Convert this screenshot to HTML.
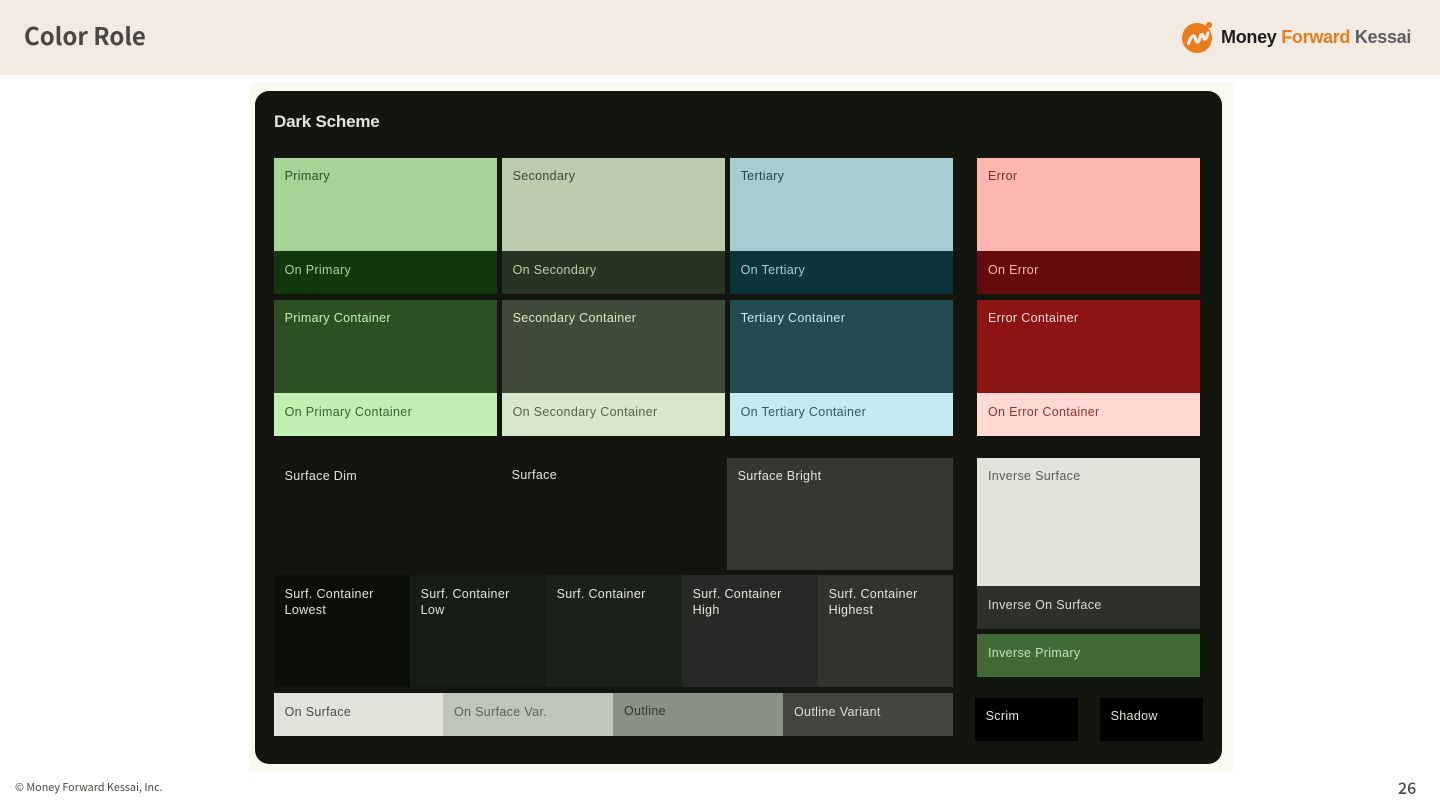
<!DOCTYPE html>
<html><head><meta charset="utf-8"><style>
html,body{margin:0;padding:0;background:#fff}
body{width:1440px;height:810px;overflow:hidden;position:relative;font-family:"Liberation Sans",sans-serif}
div{position:absolute;box-sizing:border-box}
.b{font-size:12.5px;line-height:16px;letter-spacing:.33px;padding:11px 0 0 10.6px;white-space:pre-line}
.t{padding-top:10px}
.r{padding-left:11px}
</style></head><body>
<div style="left:0;top:0;width:1440px;height:75px;background:#f3ebe2"></div>
<div style="left:24px;top:17px;font:700 24px/36px 'Noto Sans CJK JP',sans-serif;color:#4a4742;white-space:nowrap">Color Role</div>
<svg style="position:absolute;left:1180px;top:20px" width="36" height="34" viewBox="0 0 36 34"><circle cx="17" cy="18" r="15" fill="#e87d1e"/><circle cx="29" cy="5" r="3" fill="#e87d1e"/><path d="M8.500 23.500C10 19 12 15.500 14 16C16 16.500 15 22 17.500 22C20 22 19.500 14 22 14.500C24 15 23 19.500 25 19C26.500 18.500 27 16 28 13" fill="none" stroke="#f3ebe2" stroke-width="3.200" stroke-linecap="round"/></svg>
<div style="left:1221px;top:24px;font:700 18px/26px 'Liberation Sans',sans-serif;white-space:nowrap;color:#1d1d1d;letter-spacing:-.3px">Money <span style="color:#e87d1e">Forward</span> <span style="color:#5f5f5f">Kessai</span></div>
<div style="left:249px;top:83px;width:984px;height:688px;background:#f8faf0"></div>
<div style="left:255px;top:91px;width:967px;height:673px;background:#13150f;border-radius:14px"></div>
<div style="left:274px;top:110px;font:700 17px/24px 'Liberation Sans',sans-serif;letter-spacing:-.2px;color:#e3e4dc;white-space:nowrap">Dark Scheme</div>

<div class="b t" style="left:274px;top:158px;width:223px;height:93px;background:#a6d497;color:#2b4f24">Primary</div>
<div class="b t" style="left:502px;top:158px;width:223px;height:93px;background:#bbcbb0;color:#3f4a39">Secondary</div>
<div class="b t" style="left:730px;top:158px;width:223px;height:93px;background:#a5ced1;color:#22494d">Tertiary</div>
<div class="b t r" style="left:977px;top:158px;width:223px;height:93px;background:#fdb7ae;color:#7c2a22">Error</div>

<div class="b" style="left:274px;top:251px;width:223px;height:43px;background:#13370c;color:#a6d497">On Primary</div>
<div class="b" style="left:502px;top:251px;width:223px;height:43px;background:#283422;color:#bbcbb0">On Secondary</div>
<div class="b" style="left:730px;top:251px;width:223px;height:43px;background:#0b3539;color:#a5ced1">On Tertiary</div>
<div class="b r" style="left:977px;top:251px;width:223px;height:43px;background:#630c0b;color:#fdb7ae">On Error</div>

<div class="b t" style="left:274px;top:300px;width:223px;height:93px;background:#2c4f23;color:#c2efb2">Primary Container</div>
<div class="b t" style="left:502px;top:300px;width:223px;height:93px;background:#3f4a38;color:#d7e7cb">Secondary Container</div>
<div class="b t" style="left:730px;top:300px;width:223px;height:93px;background:#234c50;color:#c1ebee">Tertiary Container</div>
<div class="b t r" style="left:977px;top:300px;width:223px;height:93px;background:#8c1513;color:#ffdad5">Error Container</div>

<div class="b" style="left:274px;top:393px;width:223px;height:43px;background:#c2efb2;color:#3a6330">On Primary Container</div>
<div class="b" style="left:502px;top:393px;width:223px;height:43px;background:#d7e7cb;color:#56644e">On Secondary Container</div>
<div class="b" style="left:730px;top:393px;width:223px;height:43px;background:#c1ebee;color:#2e5a5e">On Tertiary Container</div>
<div class="b r" style="left:977px;top:393px;width:223px;height:43px;background:#ffdad5;color:#96302a">On Error Container</div>

<div class="b t" style="left:274px;top:458px;width:227px;height:112px;background:#12140f;color:#e2e3da">Surface Dim</div>
<div class="b t" style="left:501px;top:457px;width:226px;height:113px;background:#13150f;color:#e2e3da">Surface</div>
<div class="b t" style="left:727px;top:458px;width:226px;height:112px;background:#353733;color:#e2e3da">Surface Bright</div>

<div class="b" style="left:274px;top:575px;width:136px;height:112px;background:#0c0e09;color:#e2e3da">Surf. Container
Lowest</div>
<div class="b" style="left:410px;top:575px;width:136px;height:112px;background:#181c17;color:#e2e3da">Surf. Container
Low</div>
<div class="b" style="left:546px;top:575px;width:136px;height:112px;background:#1c201b;color:#e2e3da">Surf. Container</div>
<div class="b" style="left:682px;top:575px;width:136px;height:112px;background:#262925;color:#e2e3da">Surf. Container
High</div>
<div class="b" style="left:818px;top:575px;width:135px;height:112px;background:#31332e;color:#e2e3da">Surf. Container
Highest</div>

<div class="b" style="left:274px;top:693px;width:169px;height:43px;background:#e0e3da;color:#4a4c47">On Surface</div>
<div class="b r" style="left:443px;top:693px;width:170px;height:43px;background:#bfc5b9;color:#5d6259">On Surface Var.</div>
<div class="b t r" style="left:613px;top:693px;width:170px;height:43px;background:#8b9085;color:#33362f">Outline</div>
<div class="b r" style="left:783px;top:693px;width:170px;height:43px;background:#42463e;color:#dcdfd6">Outline Variant</div>

<div class="b t r" style="left:977px;top:458px;width:223px;height:128px;background:#e0e3da;color:#5a5c57">Inverse Surface</div>
<div class="b r" style="left:977px;top:586px;width:223px;height:43px;background:#2e312b;color:#d8dbd2">Inverse On Surface</div>
<div class="b r" style="left:977px;top:634px;width:223px;height:43px;background:#416a36;color:#c2e0b6">Inverse Primary</div>
<div class="b t" style="left:975px;top:698px;width:103px;height:43px;background:#000;color:#e2e3da">Scrim</div>
<div class="b t" style="left:1100px;top:698px;width:103px;height:43px;background:#000;color:#e2e3da">Shadow</div>

<div style="left:15px;top:779px;font:400 10.800px/16px 'Noto Sans CJK JP',sans-serif;color:#4a4742;white-space:nowrap">© Money Forward Kessai, Inc.</div>
<div style="left:1398px;top:776px;font:500 16px/22px 'Noto Sans CJK JP',sans-serif;color:#4a4742">26</div>
</body></html>
